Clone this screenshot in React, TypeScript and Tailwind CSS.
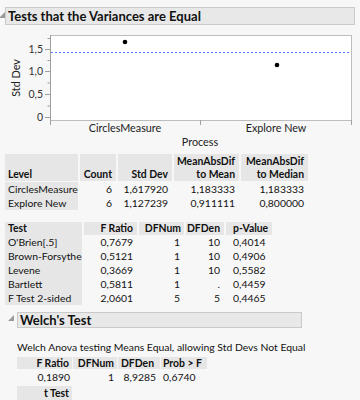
import React from "react";

function Tri({ className = "" }: { className?: string }) {
  return (
    <svg width="6" height="6" viewBox="0 0 6 6" className={className}>
      <polygon points="6,0 6,6 0,6" fill="#9a9a9a" />
    </svg>
  );
}

function Chart() {
  const majors = [
    { y: 117, l: "0" },
    { y: 94, l: "0,5" },
    { y: 71, l: "1,0" },
    { y: 49, l: "1,5" },
  ];
  const minors = [105.5, 82.5, 60, 38];
  return (
    <svg width="360" height="129" viewBox="0 25 360 129" className="block">
      <rect x="50.5" y="35.5" width="301" height="85" fill="#ffffff" stroke="#bdbdbd" />
      <line x1="50.5" y1="35" x2="50.5" y2="125" stroke="#a0a0a0" />
      {majors.map((m) => (
        <g key={m.l}>
          <line x1="45" y1={m.y + 0.5} x2="50" y2={m.y + 0.5} stroke="#a0a0a0" />
          <text x="43" y={m.y + 4} textAnchor="end" fontSize="10.5" fill="#333">
            {m.l}
          </text>
        </g>
      ))}
      {minors.map((y) => (
        <line key={y} x1="47.5" y1={y + 0.5} x2="50" y2={y + 0.5} stroke="#a0a0a0" />
      ))}
      <line x1="200.5" y1="120" x2="200.5" y2="125" stroke="#a0a0a0" />
      <line x1="351.5" y1="120" x2="351.5" y2="125" stroke="#a0a0a0" />
      <line x1="51" y1="52.5" x2="351" y2="52.5" stroke="#4d7cf5" strokeDasharray="2 2" />
      <circle cx="125" cy="42" r="2.3" fill="#000" />
      <circle cx="277" cy="65" r="2.3" fill="#000" />
      <text x="125" y="132" textAnchor="middle" fontSize="10.8" fill="#222">
        CirclesMeasure
      </text>
      <text x="276" y="132" textAnchor="middle" fontSize="10.8" fill="#222">
        Explore New
      </text>
      <text x="200" y="145.5" textAnchor="middle" fontSize="10.8" fill="#222">
        Process
      </text>
      <text
        x="0"
        y="0"
        transform="translate(20 78) rotate(-90)"
        textAnchor="middle"
        fontSize="10.8"
        fill="#222"
      >
        Std Dev
      </text>
    </svg>
  );
}

const hd = "bg-[#e6e6e6] font-bold";

export default function App() {
  return (
    <div className="w-[360px] h-[400px] overflow-hidden bg-[#f7f7f7] text-[#111] [font-family:Lato,'Noto_Sans',sans-serif] text-[10.4px]">
      {/* Header 1 */}
      <div className="flex items-start pt-[7px] h-[25px]">
        <Tri className="mt-[5px] -ml-[1px]" />
        <div className="w-[350px] h-[18px] bg-[#e8e8e8] border border-[#cacaca] flex items-center pl-[2px] font-bold text-[13px] leading-none">
          Tests that the Variances are Equal
        </div>
      </div>

      <Chart />

      {/* Table 1 */}
      <div className="ml-[5px]">
        <div className="grid grid-cols-[73px_36px_54px_65px_67px] gap-x-[2px] h-[27px] leading-[12.5px]">
          <div className={`${hd} flex items-end pl-[3px] pb-[1px]`}>Level</div>
          <div className={`${hd} flex items-end justify-end pr-[4px] pb-[1px]`}>Count</div>
          <div className={`${hd} flex items-end justify-end pr-[4px] pb-[1px]`}>Std Dev</div>
          <div className={`${hd} flex flex-col items-end justify-end pr-[4px] pb-[1px]`}>
            <span>MeanAbsDif</span>
            <span>to Mean</span>
          </div>
          <div className={`${hd} flex flex-col items-end justify-end pr-[4px] pb-[1px]`}>
            <span>MeanAbsDif</span>
            <span>to Median</span>
          </div>
        </div>
        <div className="grid grid-cols-[73px_36px_54px_65px_67px] gap-x-[2px] mt-[1px] auto-rows-[14px] leading-[14px]">
          <div className="bg-[#e6e6e6] pl-[3px] whitespace-nowrap">CirclesMeasure</div>
          <div className="text-right pr-[4px]">6</div>
          <div className="text-right pr-[4px]">1,617920</div>
          <div className="text-right pr-[4px]">1,183333</div>
          <div className="text-right pr-[4px]">1,183333</div>
          <div className="bg-[#e6e6e6] pl-[3px]">Explore New</div>
          <div className="text-right pr-[4px]">6</div>
          <div className="text-right pr-[4px]">1,127239</div>
          <div className="text-right pr-[4px]">0,911111</div>
          <div className="text-right pr-[4px]">0,800000</div>
        </div>
      </div>

      {/* Table 2 */}
      <div className="ml-[5px] mt-[12px]">
        <div className="grid grid-cols-[77px_53px_45px_38px_46px] gap-x-[2px] h-[13px] leading-[13px]">
          <div className={`${hd} pl-[3px]`}>Test</div>
          <div className={`${hd} text-right pr-[4px]`}>F Ratio</div>
          <div className={`${hd} text-right pr-[3px]`}>DFNum</div>
          <div className={`${hd} text-right pr-[4px]`}>DFDen</div>
          <div className={`${hd} pl-[7px]`}>p-Value</div>
        </div>
        <div className="grid grid-cols-[77px_53px_45px_38px_46px] gap-x-[2px] auto-rows-[14px] leading-[14px]">
          {[
            ["O'Brien[.5]", "0,7679", "1", "10", "0,4014"],
            ["Brown-Forsythe", "0,5121", "1", "10", "0,4906"],
            ["Levene", "0,3669", "1", "10", "0,5582"],
            ["Bartlett", "0,5811", "1", ".", "0,4459"],
            ["F Test 2-sided", "2,0601", "5", "5", "0,4465"],
          ].map((r) => (
            <React.Fragment key={r[0]}>
              <div className="bg-[#e6e6e6] pl-[3px] whitespace-nowrap">{r[0]}</div>
              <div className="text-right pr-[4px]">{r[1]}</div>
              <div className="text-right pr-[4px]">{r[2]}</div>
              <div className="text-right pr-[4px]">{r[3]}</div>
              <div className="pl-[7px]">{r[4]}</div>
            </React.Fragment>
          ))}
        </div>
      </div>

      {/* Welch header */}
      <div className="flex items-start mt-[7px] ml-[8px]">
        <Tri className="mt-[3px] mr-[3px]" />
        <div className="w-[285px] h-[16px] bg-[#e8e8e8] border border-[#cacaca] flex items-center pl-[2px] font-bold text-[13px] leading-none">
          Welch's Test
        </div>
      </div>

      <div className="ml-[17px] mt-[13px] leading-[13px] whitespace-nowrap">
        Welch Anova testing Means Equal, allowing Std Devs Not Equal
      </div>

      <div className="ml-[17px] mt-[3px]">
        <div className="grid grid-cols-[55px_44px_42px_46px] gap-x-[1px] h-[12px] leading-[12px]">
          <div className={`${hd} text-right pr-[3px]`}>F Ratio</div>
          <div className={`${hd} text-right pr-[3px]`}>DFNum</div>
          <div className={`${hd} text-right pr-[6px]`}>DFDen</div>
          <div className={`${hd} pl-[2px]`}>Prob &gt; F</div>
        </div>
        <div className="grid grid-cols-[55px_44px_42px_46px] gap-x-[1px] h-[17px] leading-[17px]">
          <div className="text-right pr-[2px]">0,1890</div>
          <div className="text-right pr-[3px]">1</div>
          <div className="text-right pr-[4px]">8,9285</div>
          <div className="pl-[2px]">0,6740</div>
        </div>
        <div className="w-[55px] h-[14px] leading-[14px] bg-[#e6e6e6] font-bold text-right pr-[3px]">
          t Test
        </div>
      </div>
    </div>
  );
}
